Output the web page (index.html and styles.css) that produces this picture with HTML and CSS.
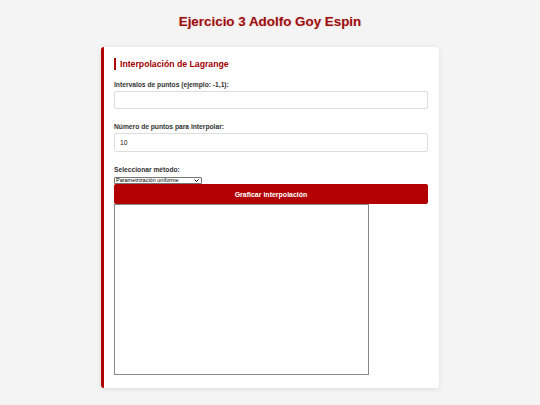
FILE: index.html
```html
<!DOCTYPE html>
<html lang="es">
<head>
<meta charset="utf-8">
<title>Ejercicio 3</title>
<link rel="stylesheet" href="styles.css">
</head>
<body>
<h1 class="title">Ejercicio 3 Adolfo Goy Espin</h1>
<div class="card">
  <h2 class="section">Interpolación de Lagrange</h2>
  <label class="lbl" for="iv">Intervalos de puntos (ejemplo: -1,1):</label>
  <input class="field" id="iv" type="text">
  <label class="lbl lbl-gap" for="np">Número de puntos para interpolar:</label>
  <input class="field field-2" id="np" type="text" value="10">
  <label class="lbl lbl-gap" for="mt">Seleccionar método:</label>
  <span class="sel-wrap">
    <select class="sel" id="mt"><option>Parametrización uniforme</option></select>
    <svg class="sel-arrow" width="5" height="3" viewBox="0 0 5 3"><path d="M0.5 0.5 L2.5 2.5 L4.5 0.5" fill="none" stroke="#000" stroke-width="1"/></svg>
  </span>
  <button class="btn" type="button">Graficar interpolación</button>
  <div class="canvas"></div>
</div>
</body>
</html>
```
FILE: styles.css
```css
html, body {
  margin: 0;
  padding: 0;
}
body {
  background: #f4f4f4;
  font-family: "Liberation Sans", Arial, sans-serif;
  color: #333;
  width: 540px;
  height: 405px;
  overflow: hidden;
}
.title {
  margin: 0;
  padding-top: 14px;
  height: 33px;
  box-sizing: border-box;
  text-align: center;
  font-size: 13.4px;
  line-height: 16px;
  font-weight: bold;
  color: #9b0d0d;
  text-shadow: 0 0 2px rgba(200, 0, 0, 0.2);
}
.card {
  margin-top: 14px;
  margin-left: 101px;
  width: 338px;
  height: 341px;
  box-sizing: border-box;
  background: #fff;
  border-left: 3px solid #b00000;
  border-radius: 3px;
  box-shadow: 0 1px 5px rgba(0, 0, 0, 0.1);
  padding: 11px 11px 0 10px;
  display: flex;
  flex-direction: column;
}
.section {
  margin: 0;
  font-size: 8.7px;
  line-height: 12px;
  font-weight: bold;
  color: #a00000;
  border-left: 2px solid #b00000;
  padding-left: 4px;
}
.lbl {
  display: block;
  margin-top: 11px;
  font-size: 6.7px;
  line-height: 8px;
  font-weight: bold;
  color: #333;
}
.lbl-gap {
  margin-top: 14px;
}
.field {
  margin-top: 2px;
  height: 18px;
  box-sizing: border-box;
  border: 1px solid #ddd;
  border-radius: 2px;
  padding: 0 5px;
  font-family: "Liberation Sans", Arial, sans-serif;
  font-size: 6.7px;
  color: #222;
  outline: none;
}
.field-2 {
  height: 19px;
}
.sel-wrap {
  position: relative;
  margin-top: 3px;
  align-self: flex-start;
  display: block;
  width: 88px;
  height: 7px;
}
.sel {
  display: block;
  width: 88px;
  height: 7px;
  box-sizing: border-box;
  padding: 0 0 0 1px;
  -webkit-appearance: none;
  appearance: none;
  font-family: "Liberation Sans", Arial, sans-serif;
  font-size: 5.5px;
  line-height: 5px;
  border: 1px solid #767676;
  border-radius: 1px;
  background: #fff;
  color: #000;
}
.sel-arrow {
  position: absolute;
  right: 3px;
  top: 2px;
}
.btn {
  height: 20px;
  border: 0;
  border-radius: 2px;
  background: #b30000;
  color: #fff;
  font-family: "Liberation Sans", Arial, sans-serif;
  font-size: 7px;
  font-weight: bold;
  padding: 0;
}
.canvas {
  width: 255px;
  height: 171px;
  box-sizing: border-box;
  border: 1px solid #888;
  background: #fff;
}
```
